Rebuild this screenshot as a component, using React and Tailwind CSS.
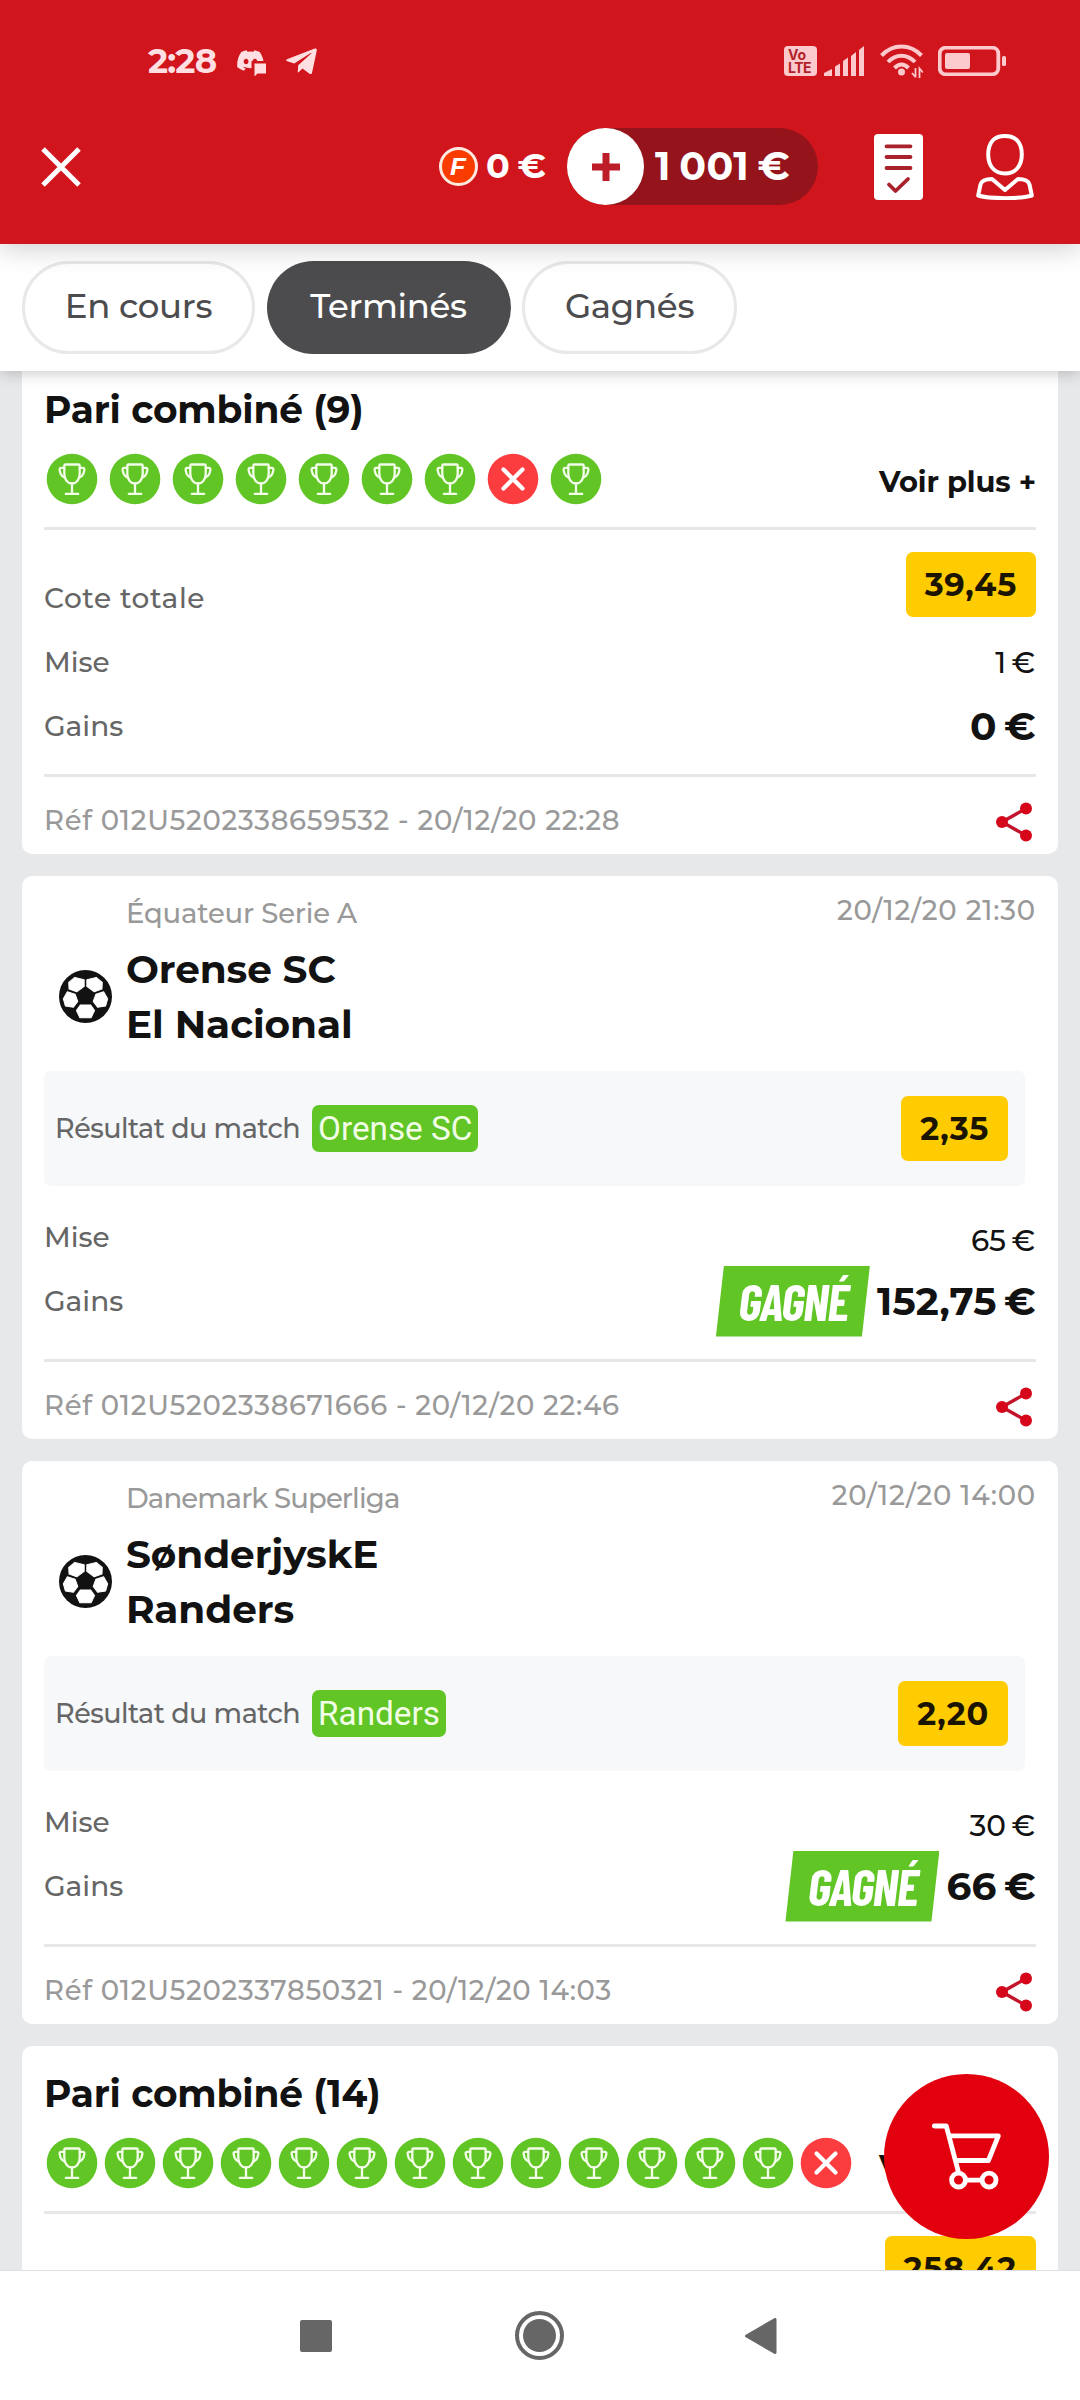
import React, { useState } from 'react';
import clsx from 'clsx';
import { FaDiscord, FaTelegramPlane } from 'react-icons/fa';

const TABS = [
  { id: 'open', label: 'En cours', width: 'w-[233px]' },
  { id: 'done', label: 'Terminés', width: 'w-[244px]' },
  { id: 'won', label: 'Gagnés', width: 'w-[215px]' },
];

// W = won leg, L = lost leg
const BETS = [
  {
    id: '012U5202338659532',
    type: 'combo',
    title: 'Pari combiné (9)',
    legs: 'WWWWWWWLW',
    legGap: 'gap-[11px]',
    odds: '39,45',
    stake: '1 €',
    gains: '0 €',
    placedAt: '20/12/20 22:28',
  },
  {
    id: '012U5202338671666',
    type: 'single',
    league: 'Équateur Serie A',
    leagueTracking: 'tracking-[-0.2px]',
    date: '20/12/20 21:30',
    teams: ['Orense SC', 'El Nacional'],
    pick: 'Orense SC',
    odds: '2,35',
    stake: '65 €',
    gains: '152,75 €',
    won: true,
    placedAt: '20/12/20 22:46',
  },
  {
    id: '012U5202337850321',
    type: 'single',
    league: 'Danemark Superliga',
    leagueTracking: 'tracking-[-0.85px]',
    date: '20/12/20 14:00',
    teams: ['SønderjyskE', 'Randers'],
    pick: 'Randers',
    odds: '2,20',
    stake: '30 €',
    gains: '66 €',
    won: true,
    placedAt: '20/12/20 14:03',
  },
  {
    id: 'combo-14',
    type: 'combo',
    title: 'Pari combiné (14)',
    legs: 'WWWWWWWWWWWWWL',
    legGap: 'gap-[6px]',
    odds: '258,42',
  },
];

const WonIcon = () => (
  <svg viewBox="0 0 52 52" className="size-[52px] shrink-0" fill="none" stroke="#f4fde9" strokeWidth="2.300" strokeLinecap="round" strokeLinejoin="round">
    <circle cx="26" cy="26" r="25.300" fill="#61c526" stroke="none" />
    <path d="M19.500 11.500h13c.8 0 1.200.5 1.200 1.200V21c0 5.800-3.700 9.500-7.700 9.500s-7.700-3.700-7.700-9.500v-8.300c0-.7.4-1.200 1.200-1.200z" />
    <path d="M18.300 14.800h-3c-1.500 0-1.900 1-1.600 2.600.6 3.500 2 6.300 5.200 7.300M33.700 14.800h3c1.500 0 1.900 1 1.600 2.600-.6 3.500-2 6.300-5.200 7.300" />
    <path d="M26 30.500v10M19.800 40.900h12.400" />
  </svg>
);

const LostIcon = () => (
  <svg viewBox="0 0 52 52" className="size-[52px] shrink-0" fill="none" stroke="#fff" strokeWidth="4.200" strokeLinecap="round">
    <circle cx="26" cy="26" r="25.300" fill="#fc3d40" stroke="none" />
    <path d="M16.500 16.500l19 19M35.500 16.500l-19 19" />
  </svg>
);

const BallIcon = () => (
  <svg viewBox="13 13 158 158" className="size-[53px]">
    <circle cx="92" cy="92" r="79" fill="#121212" />
    <g fill="#fff" stroke="#fff" strokeWidth="3" strokeLinejoin="round">
      <path d="M60 35L88 42L88 62L66 78L43 70L42 50z" />
      <path d="M124 35L96 42L96 62L118 78L141 70L142 50z" />
      <path d="M38 78L61 85L69 107L56 124L32 120L26 99z" />
      <path d="M146 78L123 85L115 107L128 124L152 120L158 99z" />
      <path d="M77 117L107 117L119 134L109 155L75 155L65 134z" />
    </g>
  </svg>
);

const ShareIcon = () => (
  <svg viewBox="0 0 36 40" className="h-[40px] w-[36px]" fill="#d6071b">
    <path d="M30 6.500L6 20L30 33.500" fill="none" stroke="#c2142a" strokeWidth="3.400" />
    <circle cx="30" cy="6.500" r="6" />
    <circle cx="6" cy="20" r="6" />
    <circle cx="30" cy="33.500" r="6" />
  </svg>
);

const CartIcon = () => (
  <svg viewBox="1110 270 220 212" className="h-[71px] w-[73px]" fill="none" stroke="#fff" strokeWidth="14.500" strokeLinecap="round" strokeLinejoin="round">
    <path d="M1123 284h36l36 136" />
    <path d="M1172 314h144l-30 74h-92" />
    <path d="M1218 447h48" />
    <circle cx="1196" cy="447" r="21" />
    <circle cx="1288" cy="447" r="21" />
  </svg>
);

const StatusBar = () => (
  <div className="flex h-[64px] items-center pr-[74px] pl-[148px] text-[#ffdfe2]">
    <span className="w-[88px] text-[34px] font-bold tracking-[-0.8px]">2:28</span>
    <div className="relative mr-[18px] size-[30px]">
      <FaDiscord className="size-[29px]" />
      <svg viewBox="0 0 30 30" className="absolute inset-0 size-[30px]">
        <path d="M15.500 15H30v15H15.500z" fill="#d0161c" />
        <path d="M18.500 17.500h12v10h-9l-3 3z" fill="currentColor" />
      </svg>
    </div>
    <FaTelegramPlane className="size-[35px]" />

    <div className="ml-auto flex items-center text-[#fcc9cd]">
      <div className="mr-[7px] flex h-[30px] w-[33px] flex-col justify-center rounded-[4px] bg-[#fcc9cd] pl-[4px] font-[Inter,sans-serif] text-[14px] leading-[13px] font-bold text-[#b3222a]">
        <span>Vo</span>
        <span className="tracking-[-0.5px]">LTE</span>
      </div>
      <svg viewBox="0 0 40 30" className="mr-[16px] h-[30px] w-[40px]" fill="currentColor">
        <path d="M0 30v-3l8-4v7zM11 30V20.500l5-3V30zM19 30V15l5-3.500V30zM27 30V10l5-4V30zM35 30V4l5-4v30z" />
      </svg>
      <svg viewBox="0 0 43 34" className="mr-[15px] h-[34px] w-[43px]" fill="none" stroke="currentColor" strokeWidth="4">
        <path d="M1.500 11.500C13 -0.500 30 -0.500 41.500 11.500M8 18C16 9.500 27 9.500 35 18M14.500 24C19 19.500 24 19.500 28.500 24" />
        <circle cx="21.500" cy="28" r="3.500" fill="currentColor" stroke="none" />
        <path d="M35.500 24v9.500M32 29l3.500 4M39.500 34v-9.500l3.500 4" strokeWidth="1.800" />
      </svg>
      <svg viewBox="0 0 68 30" className="h-[30px] w-[68px]" fill="currentColor">
        <rect x="1.700" y="1.700" width="58.600" height="26.600" rx="6" fill="none" stroke="currentColor" strokeWidth="3.800" />
        <rect x="7" y="7" width="25" height="16" rx="2" />
        <rect x="64" y="10" width="4" height="10" rx="1.500" />
      </svg>
    </div>
  </div>
);

const Header = () => (
  <header className="relative z-20 h-[244px] shrink-0 bg-[#d0161c] pt-[29px] text-white shadow-[0_4px_26px_rgba(0,0,0,0.2)]">
    <StatusBar />
    <div className="mt-[35px] flex h-[77px] items-center pr-[46px] pl-[41px]">
      <button type="button" aria-label="Fermer">
        <svg viewBox="0 0 40 40" className="size-[40px]" stroke="#fff" strokeWidth="5">
          <path d="M2 2l36 36M38 2L2 38" />
        </svg>
      </button>

      <div className="ml-auto flex items-center">
        <span className="mr-[8px] flex size-[39px] items-center justify-center rounded-full border-[3px] border-[#ffe9e0] bg-[#fa3c00] pr-[2px] text-[24px] leading-none font-bold text-white italic">
          F
        </span>
        <span className="w-[81px] text-[35px] font-bold tracking-[-0.3px] whitespace-nowrap [word-spacing:-1.500px]">0 €</span>
        <div className="mr-[56px] flex h-[77px] w-[251px] items-center rounded-full bg-[#95141b]">
          <span className="flex size-[77px] shrink-0 items-center justify-center rounded-full bg-white">
            <svg viewBox="0 0 28 28" className="size-[28px]" stroke="#bd1d29" strokeWidth="7">
              <path d="M14 0v28M0 14h28" />
            </svg>
          </span>
          <span className="ml-[11px] text-[39.500px] font-bold tracking-[0.3px] whitespace-nowrap [word-spacing:-3px]">1 001 €</span>
        </div>
        <svg viewBox="0 0 49 66" className="mr-[53px] h-[66px] w-[49px]" fill="none" stroke="#a9222b" strokeWidth="3.800" strokeLinecap="round" strokeLinejoin="round">
          <rect width="49" height="66" rx="4" fill="#fff" stroke="none" />
          <path d="M12.500 12.300h24M12.500 23h24M12.500 34h24M15 50.500l6.500 6.500L34 45" />
        </svg>
        <svg viewBox="0 0 58 66" className="h-[66px] w-[58px]" fill="none" stroke="#fff" strokeWidth="4" strokeLinejoin="round">
          <path d="M29 2C40 2 45.800 8.500 45.800 20.500S39 39.500 29 39.500S12.200 32.500 12.200 20.500S18 2 29 2z" />
          <path d="M2.200 61.500L4.500 50.500C5.500 47 9 45 16 45L29 56L42 45C49 45 52.500 47 53.500 50.500L55.800 61.500C45 65 13 65 2.200 61.500z" />
        </svg>
      </div>
    </div>
  </header>
);

const Tabs = ({ active, onChange }) => (
  <nav className="relative z-10 flex h-[127px] shrink-0 gap-[11.500px] bg-white pt-[17px] pl-[22px] shadow-[0_2px_14px_rgba(0,0,0,0.22)]">
    {TABS.map((tab) => (
      <button
        key={tab.id}
        type="button"
        onClick={() => onChange(tab.id)}
        className={clsx(
          'h-[93px] rounded-full pb-[3px] text-[34px] font-medium tracking-[-0.3px]',
          tab.width,
          active === tab.id ? 'bg-[#4c4c4e] text-white' : 'border-[3px] border-[#e8e8e8] bg-white text-[#4c4c4e]'
        )}
      >
        {tab.label}
      </button>
    ))}
  </nav>
);

const OddsBadge = ({ children }) => (
  <span className="flex h-[65px] items-center rounded-[7px] bg-[#ffcc02] px-[19px] text-[32px] font-bold tracking-[0.8px] text-[#1b1400]">{children}</span>
);

const Stake = ({ children }) => (
  <span className="mr-px text-[29.500px] font-medium text-[#121212] [word-spacing:-2.500px]">{children}</span>
);

const Gains = ({ children }) => (
  <span className="text-[39px] font-bold tracking-[0.3px] text-[#121212] [word-spacing:-4px]">{children}</span>
);

const Label = ({ children, className }) => (
  <span className={clsx('text-[28px] font-medium text-[#666]', className)}>{children}</span>
);

const WonBanner = () => (
  <span className="mr-[7px] flex h-[71px] w-[154px] items-center justify-center bg-[#61c526] font-['Barlow_Condensed',Roboto,sans-serif] text-[51px] font-bold tracking-[-1.300px] text-white italic [clip-path:polygon(8px_0,100%_0,calc(100%-8px)_100%,0_100%)]">
    GAGNÉ
  </span>
);

const CardFooter = ({ bet }) => (
  <div className="flex h-[80px] justify-between border-t-[3px] border-[#e6e7e8] pr-[4px]">
    <span className="mt-[25px] text-[27.500px] leading-[36px] font-medium tracking-[0.7px] text-[#999]">
      Réf {bet.id} - {bet.placedAt}
    </span>
    <button type="button" aria-label="Partager" className="mt-[25px] h-[40px]">
      <ShareIcon />
    </button>
  </div>
);

const ComboCard = ({ bet }) => (
  <article className="h-[492px] shrink-0 rounded-[10px] bg-white px-[22px] pt-[21px]">
    <h2 className="flex h-[55px] items-center text-[37.500px] font-bold tracking-[-0.15px] text-[#121212]">{bet.title}</h2>
    <div className="flex h-[81px] items-center justify-between">
      <div className={clsx('flex pl-[1.500px]', bet.legGap)}>
        {bet.legs.split('').map((leg, i) => (leg === 'W' ? <WonIcon key={i} /> : <LostIcon key={i} />))}
      </div>
      <span className="mt-[6px] text-[29px] font-bold tracking-[-0.1px] text-[#121212]">Voir plus +</span>
    </div>
    <div className="mt-[8px] h-[3px] bg-[#e6e7e8]" />
    <div className="mt-[22px] flex h-[78px] justify-between">
      <Label className="mt-[14px] self-center tracking-[0.6px]">Cote totale</Label>
      <OddsBadge>{bet.odds}</OddsBadge>
    </div>
    {bet.stake && (
      <>
        <div className="flex h-[64px] items-center justify-between">
          <Label>Mise</Label>
          <Stake>{bet.stake}</Stake>
        </div>
        <div className="mb-[16px] flex h-[64px] items-center justify-between">
          <Label>Gains</Label>
          <Gains>{bet.gains}</Gains>
        </div>
        <CardFooter bet={bet} />
      </>
    )}
  </article>
);

const SingleCard = ({ bet }) => (
  <article className="h-[563px] shrink-0 rounded-[10px] bg-white px-[22px] pt-[15px]">
    <div className="flex h-[45px] items-center justify-between pl-[82px] text-[27.500px] font-medium text-[#999]">
      <span className={bet.leagueTracking}>{bet.league}</span>
      <span className="mt-[-5px] tracking-[0.8px]">{bet.date}</span>
    </div>
    <div className="mt-[5px] flex h-[110px] items-center pl-[15px]">
      <BallIcon />
      <div className="mt-[2px] ml-[14px] text-[39px] leading-[55px] font-bold tracking-[-0.1px] text-[#121212]">
        {bet.teams.map((team) => (
          <div key={team}>{team}</div>
        ))}
      </div>
    </div>
    <div className="mt-[20px] mr-[11px] flex h-[115px] items-center rounded-[7px] bg-[#f6f8fa] pr-[17px] pl-[11px]">
      <span className="mt-[2px] w-[257px] text-[27px] font-medium tracking-[-0.5px] text-[#666]">Résultat du match</span>
      <span className="flex h-[47px] items-center rounded-[7px] bg-[#61c526] px-[6px] font-[Roboto,sans-serif] text-[33.300px] text-[#f2fde6]">{bet.pick}</span>
      <div className="ml-auto">
        <OddsBadge>{bet.odds}</OddsBadge>
      </div>
    </div>
    <div className="mt-[18px] flex h-[65px] items-center justify-between">
      <Label className="mt-px">Mise</Label>
      <div className="mt-[8px]">
        <Stake>{bet.stake}</Stake>
      </div>
    </div>
    <div className="mb-[26px] flex h-[64px] items-center justify-between">
      <Label>Gains</Label>
      <div className="flex items-center">
        {bet.won && <WonBanner />}
        <Gains>{bet.gains}</Gains>
      </div>
    </div>
    <CardFooter bet={bet} />
  </article>
);

const SystemNav = () => (
  <footer className="flex h-[130px] shrink-0 items-center border-t border-[#dfe0e1] bg-white pl-[300px]">
    <div className="size-[32px] rounded-[2px] bg-[#666]" />
    <div className="ml-[183px] flex size-[49px] items-center justify-center rounded-full border-[4px] border-[#666]">
      <div className="size-[33px] rounded-full bg-[#666]" />
    </div>
    <svg viewBox="0 0 32 36" className="ml-[181px] h-[36px] w-[32px]" fill="#666" stroke="#666" strokeWidth="3" strokeLinejoin="round">
      <path d="M30 1.500v33L1.500 18z" />
    </svg>
  </footer>
);

const App = () => {
  const [tab, setTab] = useState('done');

  return (
    <div className="flex h-[2400px] w-[1080px] flex-col overflow-hidden bg-[#e7e8ea] font-[Montserrat,Inter,sans-serif]">
      <Header />
      <Tabs active={tab} onChange={setTab} />
      <main className="relative min-h-0 flex-1 overflow-hidden">
        {/* list is scrolled a little, the first card slides under the tabs */}
        <div className="mt-[-9px] flex flex-col gap-[22px] px-[22px]">
          {BETS.map((bet) => (bet.type === 'combo' ? <ComboCard key={bet.id} bet={bet} /> : <SingleCard key={bet.id} bet={bet} />))}
        </div>
        <button type="button" aria-label="Panier" className="absolute right-[31px] bottom-[31px] flex size-[165px] items-center justify-center rounded-full bg-[#e2000f]">
          <CartIcon />
        </button>
      </main>
      <SystemNav />
    </div>
  );
};

export default App;
